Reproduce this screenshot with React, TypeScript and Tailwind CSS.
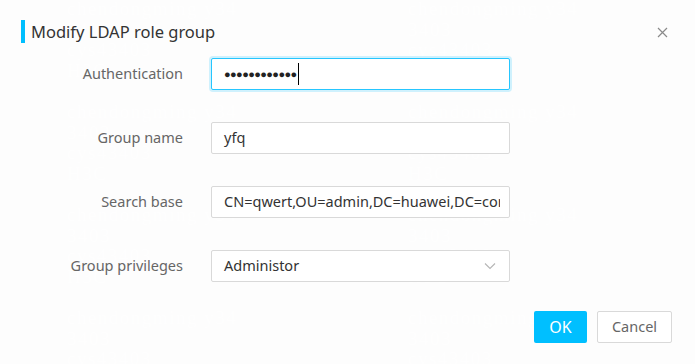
import React from 'react';

const marks = ['chendongming y34', '3403', 'cys43403', 'H3C'];

function Watermark() {
  const tops = [-1, 102, 205, 308];
  const lefts = [67, 408];
  return (
    <div className="pointer-events-none absolute inset-0 overflow-hidden">
      {tops.map((t) =>
        lefts.map((l) => (
          <div
            key={`${t}-${l}`}
            className="absolute font-['Liberation_Serif',serif] text-[19px] leading-[20.5px] tracking-[1.5px] text-white/70"
            style={{ top: t, left: l }}
          >
            {marks.map((m) => (
              <div key={m}>{m}</div>
            ))}
          </div>
        ))
      )}
    </div>
  );
}

function Row({ label, children }: { label: string; children: React.ReactNode }) {
  return (
    <div className="flex items-center h-[32px]">
      <div className="w-[183px] text-right text-[14.5px] text-[#666]">{label}</div>
      <div className="ml-[28px] w-[299px]">{children}</div>
    </div>
  );
}

export default function App() {
  return (
    <div className="relative w-[695px] h-[364px] overflow-hidden bg-[#fdfdfd] font-['Noto_Sans',sans-serif]">
      <Watermark />

      <div className="relative">
        {/* Header */}
        <div className="flex items-center justify-between pl-[21px] pr-[27px] pt-[20px]">
          <div className="flex items-center">
            <div className="w-[4px] h-[23px] bg-[#00bfff]" />
            <span className="ml-[6px] text-[16.5px] text-[#333] leading-[23px]">Modify LDAP role group</span>
          </div>
          <svg width="11" height="11" viewBox="0 0 11 11" className="mt-[1px]">
            <path d="M1 1 L10 10 M10 1 L1 10" stroke="#8a8a8a" strokeWidth="1.2" fill="none" />
          </svg>
        </div>

        {/* Form */}
        <div className="mt-[15px] flex flex-col gap-[32px]">
          <Row label="Authentication">
            <div className="h-[32px] flex items-center rounded-[2px] border border-[#26c6ff] bg-white px-[12px] shadow-[0_0_0_2px_rgba(0,191,255,0.18)]">
              <span className="text-[11px] tracking-[-0.6px] text-[#222]">●●●●●●●●●●●●</span>
              <span className="ml-[1px] w-[1px] h-[22px] bg-black" />
            </div>
          </Row>
          <Row label="Group name">
            <div className="h-[32px] flex items-center rounded-[2px] border border-[#d9d9d9] bg-white px-[12px] text-[14.5px] text-[#333]">
              yfq
            </div>
          </Row>
          <Row label="Search base">
            <div className="h-[32px] flex items-center rounded-[2px] border border-[#d9d9d9] bg-white pl-[12px] pr-[9px] text-[14.5px] text-[#333]">
              <div className="flex-1 overflow-hidden whitespace-nowrap">CN=qwert,OU=admin,DC=huawei,DC=com</div>
            </div>
          </Row>
          <Row label="Group privileges">
            <div className="h-[32px] flex items-center justify-between rounded-[2px] border border-[#d9d9d9] bg-white pl-[12px] pr-[13px] text-[14.5px] text-[#333]">
              <span>Administor</span>
              <svg width="12" height="8" viewBox="0 0 12 8">
                <path d="M1 1.5 L6 6.5 L11 1.5" stroke="#b5b5b5" strokeWidth="1.1" fill="none" />
              </svg>
            </div>
          </Row>
        </div>

        {/* Footer */}
        <div className="mt-[29px] flex justify-end gap-[10px] pr-[23px]">
          <button className="h-[32px] w-[53px] rounded-[2px] bg-[#00bfff] text-[16px] text-white">OK</button>
          <button className="h-[32px] w-[75px] rounded-[2px] border border-[#d9d9d9] bg-white text-[14.5px] text-[#666]">
            Cancel
          </button>
        </div>
      </div>
    </div>
  );
}
